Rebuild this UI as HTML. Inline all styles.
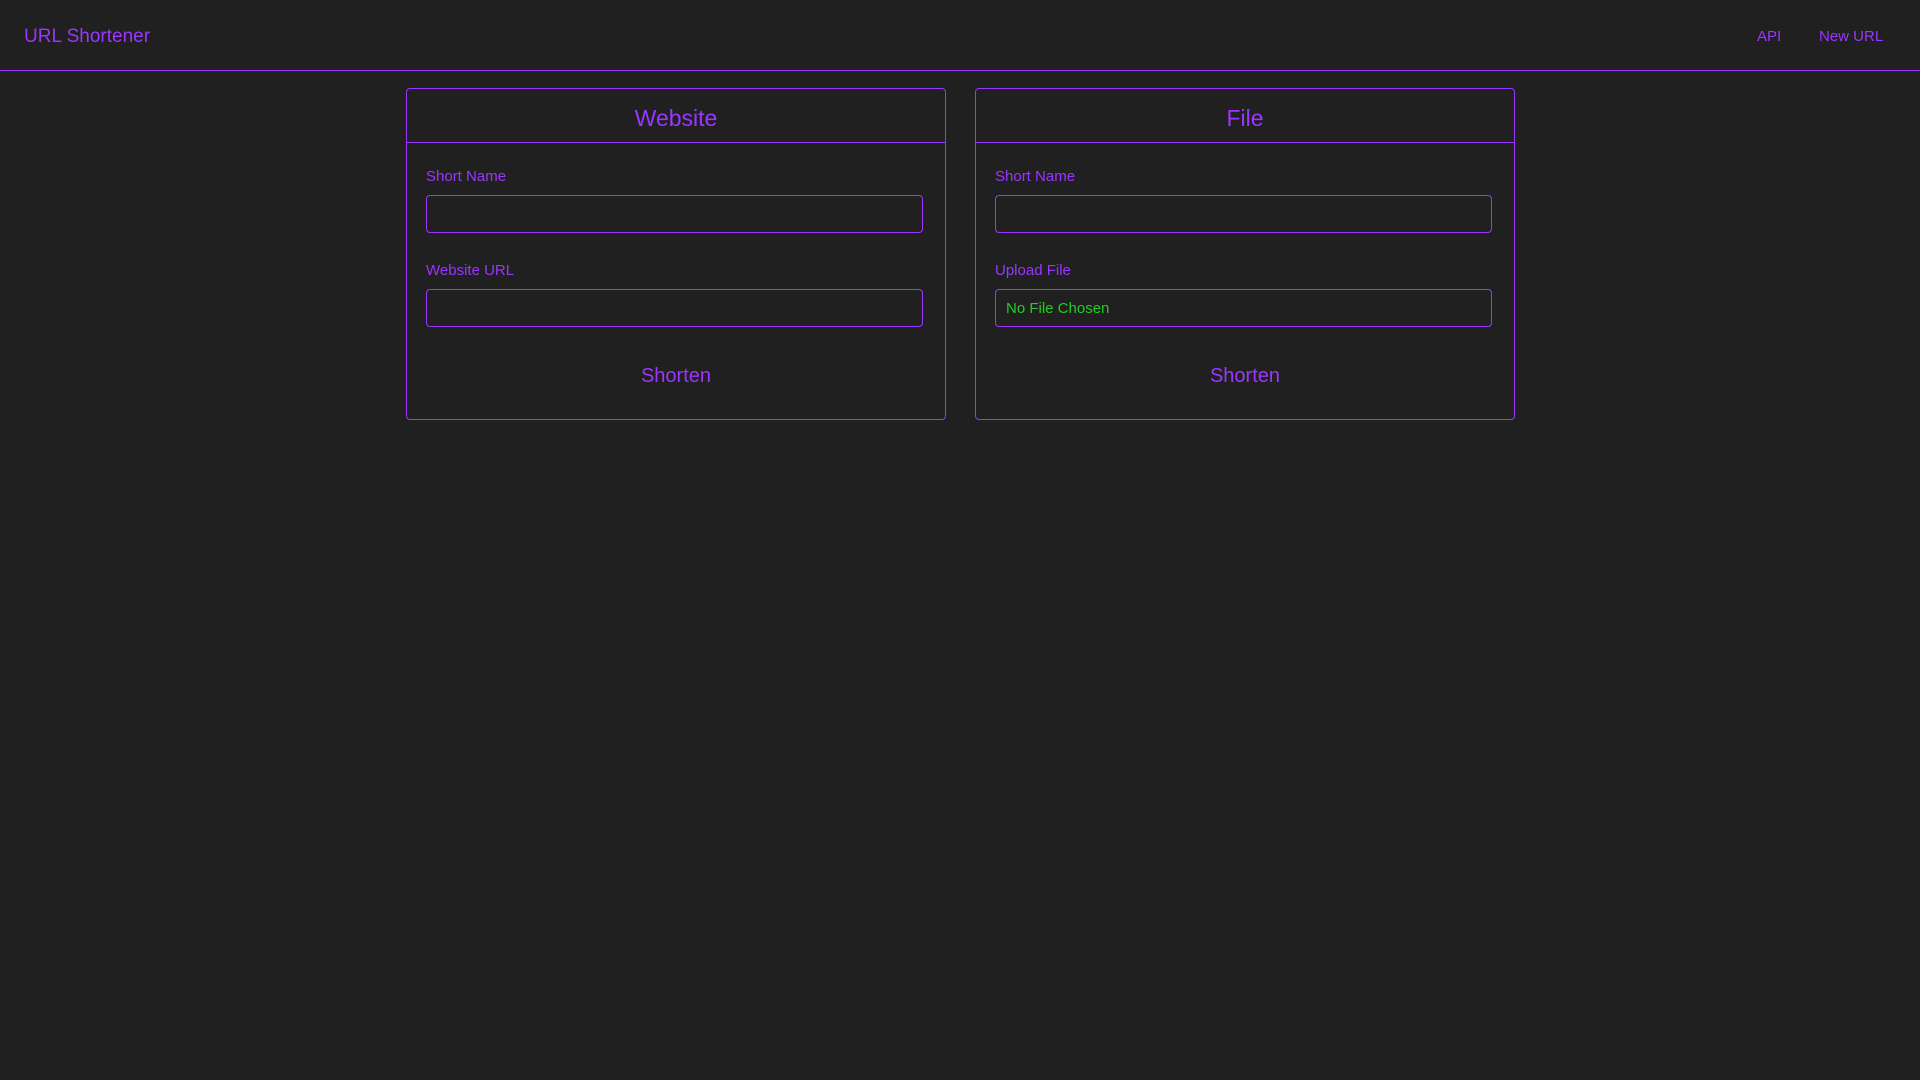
<!DOCTYPE html>
<html><head><style>
body{margin:0;background:#202020;width:1920px;height:1080px;font-family:"Liberation Sans",sans-serif;color:#9b35ff;position:relative;overflow:hidden}
.abs{position:absolute;white-space:nowrap}
.hdr{position:absolute;left:0;top:0;width:1920px;height:70px;border-bottom:1px solid #9b35ff}
.card{position:absolute;top:88px;width:536px;height:330px;border:1px solid #9b35ff;border-radius:4px}
.card .t{position:absolute;left:0;right:0;top:16px;text-align:center;font-size:23px}
.card .div{position:absolute;left:0;right:0;top:53px;border-top:1px solid #9b35ff}
.lbl{position:absolute;left:19px;font-size:15px}
.inp{position:absolute;left:19px;width:495px;height:36px;border:1px solid #9b35ff;border-radius:4px}
.btn{position:absolute;left:0;right:0;top:276px;text-align:center;font-size:20px}
</style></head><body>
<div class="hdr"></div>
<div class="abs" style="left:24px;top:26px;font-size:19px">URL Shortener</div>
<div class="abs" style="left:1757px;top:28px;font-size:15px">API</div>
<div class="abs" style="left:1819px;top:28px;font-size:15px">New URL</div>

<div class="card" style="left:406px;width:538px">
<div class="t">Website</div><div class="div"></div>
<div class="lbl" style="top:79px">Short Name</div>
<div class="inp" style="top:106px"></div>
<div class="lbl" style="top:173px">Website URL</div>
<div class="inp" style="top:200px"></div>
<div class="btn">Shorten</div>
</div>

<div class="card" style="left:975px;width:538px">
<div class="t">File</div><div class="div"></div>
<div class="lbl" style="top:79px">Short Name</div>
<div class="inp" style="top:106px"></div>
<div class="lbl" style="top:173px">Upload File</div>
<div class="inp" style="top:200px"><span style="position:absolute;left:10px;top:10px;font-size:15px;color:#22cc22">No File Chosen</span></div>
<div class="btn">Shorten</div>
</div>
</body></html>
